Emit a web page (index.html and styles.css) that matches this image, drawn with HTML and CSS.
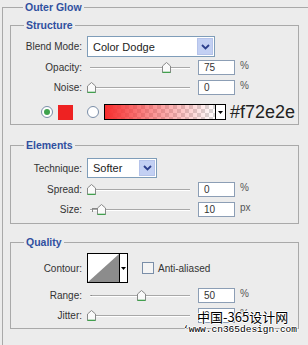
FILE: index.html
```html
<!DOCTYPE html>
<html>
<head>
    <title>Outer Glow</title>
    <link rel="stylesheet" href="styles.css">
</head>
<body>
    <fieldset class="outer">
        <legend>Outer Glow</legend>

        <fieldset class="group structure">
            <legend>Structure</legend>
            <div class="row row-select">
                <label>Blend Mode:</label>
                <div class="select wide">
                    <span class="select-text">Color Dodge</span>
                    <span class="select-btn"><svg width="9" height="6" viewBox="0 0 9 6"><path d="M1 1 L4.5 4.5 L8 1" fill="none" stroke="#2c3f8c" stroke-width="1.8"/></svg></span>
                </div>
            </div>
            <div class="row row-slider">
                <label>Opacity:</label>
                <div class="slider"><span class="thumb" style="left: 75px"></span></div>
                <div class="num">75</div>
                <span class="unit">%</span>
            </div>
            <div class="row row-slider row-gap">
                <label>Noise:</label>
                <div class="slider"><span class="thumb" style="left: 0px"></span></div>
                <div class="num">0</div>
                <span class="unit">%</span>
            </div>
            <div class="color-row">
                <span class="radio checked"></span>
                <span class="swatch"></span>
                <span class="radio"></span>
                <span class="gradient"><span class="grad-fill"></span></span>
                <span class="grad-btn"><svg width="5" height="3" viewBox="0 0 5 3"><path d="M0 0 H5 L2.5 3 Z" fill="#000"/></svg></span>
                <span class="hex">#f72e2e</span>
            </div>
        </fieldset>

        <fieldset class="group elements">
            <legend>Elements</legend>
            <div class="row row-select2">
                <label>Technique:</label>
                <div class="select narrow">
                    <span class="select-text">Softer</span>
                    <span class="select-btn"><svg width="9" height="6" viewBox="0 0 9 6"><path d="M1 1 L4.5 4.5 L8 1" fill="none" stroke="#2c3f8c" stroke-width="1.8"/></svg></span>
                </div>
            </div>
            <div class="row row-slider">
                <label>Spread:</label>
                <div class="slider"><span class="thumb" style="left: 0px"></span></div>
                <div class="num">0</div>
                <span class="unit">%</span>
            </div>
            <div class="row row-slider">
                <label>Size:</label>
                <div class="slider"><span class="tick"></span><span class="thumb" style="left: 10px"></span></div>
                <div class="num">10</div>
                <span class="unit">px</span>
            </div>
        </fieldset>

        <fieldset class="group quality">
            <legend>Quality</legend>
            <div class="row row-contour">
                <label>Contour:</label>
                <div class="contour">
                    <svg width="31" height="28" viewBox="0 0 31 28"><path d="M0 28 L31 0 V28 Z" fill="#8c8c8c"/></svg>
                    <span class="contour-btn"><svg width="5" height="3" viewBox="0 0 5 3"><path d="M0 0 H5 L2.5 3 Z" fill="#000"/></svg></span>
                </div>
                <span class="check"></span>
                <span class="check-text">Anti-aliased</span>
            </div>
            <div class="row row-slider">
                <label>Range:</label>
                <div class="slider"><span class="dot"></span><span class="thumb" style="left: 50px"></span></div>
                <div class="num">50</div>
                <span class="unit">%</span>
            </div>
            <div class="row row-slider">
                <label>Jitter:</label>
                <div class="slider"><span class="thumb" style="left: 0px"></span></div>
                <div class="num">0</div>
                <span class="unit">%</span>
            </div>
        </fieldset>
    </fieldset>

    <div class="watermark">
        <div class="wm-cn">中国-365设计网</div>
        <div class="wm-url">‘www.cn365design.com</div>
    </div>
</body>
</html>
```

FILE: styles.css
```css
body {
    margin: 0;
    background-color: #ececec;
    font-family: "Liberation Sans", Arial, sans-serif;
    font-size: 10px;
    color: #333;
    overflow: hidden;
    height: 345px;
    position: relative;
}

fieldset {
    border: 1px solid #a9a9a9;
    margin: 0;
    min-width: 0;
}

legend {
    font-weight: bold;
    font-size: 10.5px;
    line-height: 12px;
    color: #3050a0;
    padding: 0 2px;
    margin-left: 13px;
}

.outer {
    margin-left: 2px;
    width: 340px;
    padding: 5px 0 40px 7px;
}

.outer > legend {
    line-height: 14px;
}

.group {
    width: 289px;
    box-sizing: border-box;
    padding: 5px 0 4px 0;
}

.elements {
    margin-top: 14px;
    padding: 7px 0 6px 0;
}

.quality {
    margin-top: 12px;
    padding: 5px 0 5px 0;
}

.row {
    display: flex;
    align-items: center;
}

.row label {
    width: 71px;
    text-align: right;
    margin-right: 5px;
    flex-shrink: 0;
}

.row-select {
    height: 21px;
    margin-bottom: 3px;
}

.row-select2 {
    height: 20px;
    margin-bottom: 4px;
}

.row-slider {
    height: 15px;
    margin-bottom: 5px;
}

.row-slider:last-child {
    margin-bottom: 0;
}

.row-slider.row-gap {
    margin-bottom: 9px;
}

.select {
    height: 100%;
    box-sizing: border-box;
    border: 1px solid #7f9db9;
    background: #fff;
    display: flex;
    align-items: center;
    justify-content: space-between;
    padding: 1px;
}

.select.wide {
    width: 128px;
}

.select.narrow {
    width: 70px;
}

.select-text {
    font-size: 11px;
    color: #222;
    padding-left: 4px;
}

.select-btn {
    width: 16px;
    height: 100%;
    background: #c3d0f3;
    border: 1px solid #b5c3ea;
    box-sizing: border-box;
    display: flex;
    align-items: center;
    justify-content: center;
}

.slider {
    position: relative;
    width: 103px;
    height: 100%;
    margin-right: 8px;
    flex-shrink: 0;
}

.slider::before {
    content: "";
    position: absolute;
    left: 3px;
    right: 0;
    top: 7px;
    height: 1px;
    background: #a8a8a8;
    box-shadow: 0 1px 0 #fff;
}

.thumb {
    position: absolute;
    top: 2px;
    width: 9px;
    height: 11px;
    background: url("data:image/svg+xml;utf8,<svg xmlns='http://www.w3.org/2000/svg' width='9' height='11' viewBox='0 0 9 11'><path d='M0.5 4 L4.5 0.5 L8.5 4 V10.5 H0.5 Z' fill='%23fafafa' stroke='%23888'/><path d='M0.5 10.5 H8.5' stroke='%2342a04e' stroke-width='1.6'/></svg>") no-repeat;
}

.tick {
    position: absolute;
    left: 5px;
    top: 6px;
    width: 4px;
    height: 3px;
    border-top: 1px solid #888;
    border-left: 1px solid #888;
}

.dot {
    position: absolute;
    left: 4px;
    top: 7px;
    width: 1px;
    height: 1px;
    background: #888;
}

.num {
    width: 37px;
    height: 15px;
    box-sizing: border-box;
    border: 1px solid #8c9eb5;
    background: #fff;
    font-size: 10px;
    line-height: 13px;
    padding-left: 5px;
    color: #333;
}

.unit {
    margin-left: 5px;
    align-self: flex-start;
    font-size: 10px;
    color: #555;
}

.color-row {
    display: flex;
    align-items: center;
    height: 16px;
    padding-left: 30px;
}

.radio {
    width: 12px;
    height: 12px;
    box-sizing: border-box;
    border: 1px solid #7a8ea8;
    border-radius: 50%;
    background: #fff;
    display: flex;
    align-items: center;
    justify-content: center;
}

.radio.checked::after {
    content: "";
    width: 6px;
    height: 6px;
    border-radius: 50%;
    background: #3fa34d;
}

.swatch {
    width: 15px;
    height: 15px;
    background: #ee2222;
    margin: 0 14px 0 5px;
}

.gradient {
    width: 112px;
    height: 16px;
    box-sizing: border-box;
    border: 1px solid #000;
    margin-left: 5px;
    background-color: #fff;
    background-image:
        linear-gradient(45deg, #d8d8d8 25%, transparent 25%, transparent 75%, #d8d8d8 75%),
        linear-gradient(45deg, #d8d8d8 25%, transparent 25%, transparent 75%, #d8d8d8 75%);
    background-size: 8px 8px;
    background-position: 0 0, 4px 4px;
}

.grad-fill {
    display: block;
    height: 100%;
    background: linear-gradient(to right, #f72e2e, rgba(247, 46, 46, 0.55) 40%, rgba(247, 46, 46, 0));
}

.grad-btn {
    width: 10px;
    height: 16px;
    box-sizing: border-box;
    border: 1px solid #000;
    border-left: none;
    background: #fff;
    display: flex;
    align-items: center;
    justify-content: center;
}

.hex {
    font-size: 18px;
    color: #222;
    margin-left: 4px;
    line-height: 16px;
}

.row-contour {
    height: 30px;
    margin-bottom: 5px;
}

.contour {
    width: 41px;
    height: 30px;
    box-sizing: border-box;
    border: 1px solid #000;
    background: #fff;
    display: flex;
}

.contour svg {
    display: block;
    flex-shrink: 0;
}

.contour-btn {
    flex: 1;
    display: flex;
    align-items: center;
    justify-content: center;
    border-left: 1px solid #000;
}

.check {
    width: 12px;
    height: 12px;
    box-sizing: border-box;
    border: 1px solid #7a8ea8;
    background: #f4f4f4;
    margin-left: 14px;
}

.check-text {
    margin-left: 4px;
}

.watermark {
    position: absolute;
    left: 183px;
    top: 309px;
    color: #000;
    text-shadow: 1px 0 0 #fff, -1px 0 0 #fff, 0 1px 0 #fff, 0 -1px 0 #fff;
}

.wm-cn {
    padding-left: 14px;
    font-family: "Noto Sans CJK SC", sans-serif;
    font-size: 13px;
    line-height: 15px;
}

.wm-url {
    font-family: "Liberation Mono", monospace;
    font-size: 9.5px;
    line-height: 11px;
}
```
